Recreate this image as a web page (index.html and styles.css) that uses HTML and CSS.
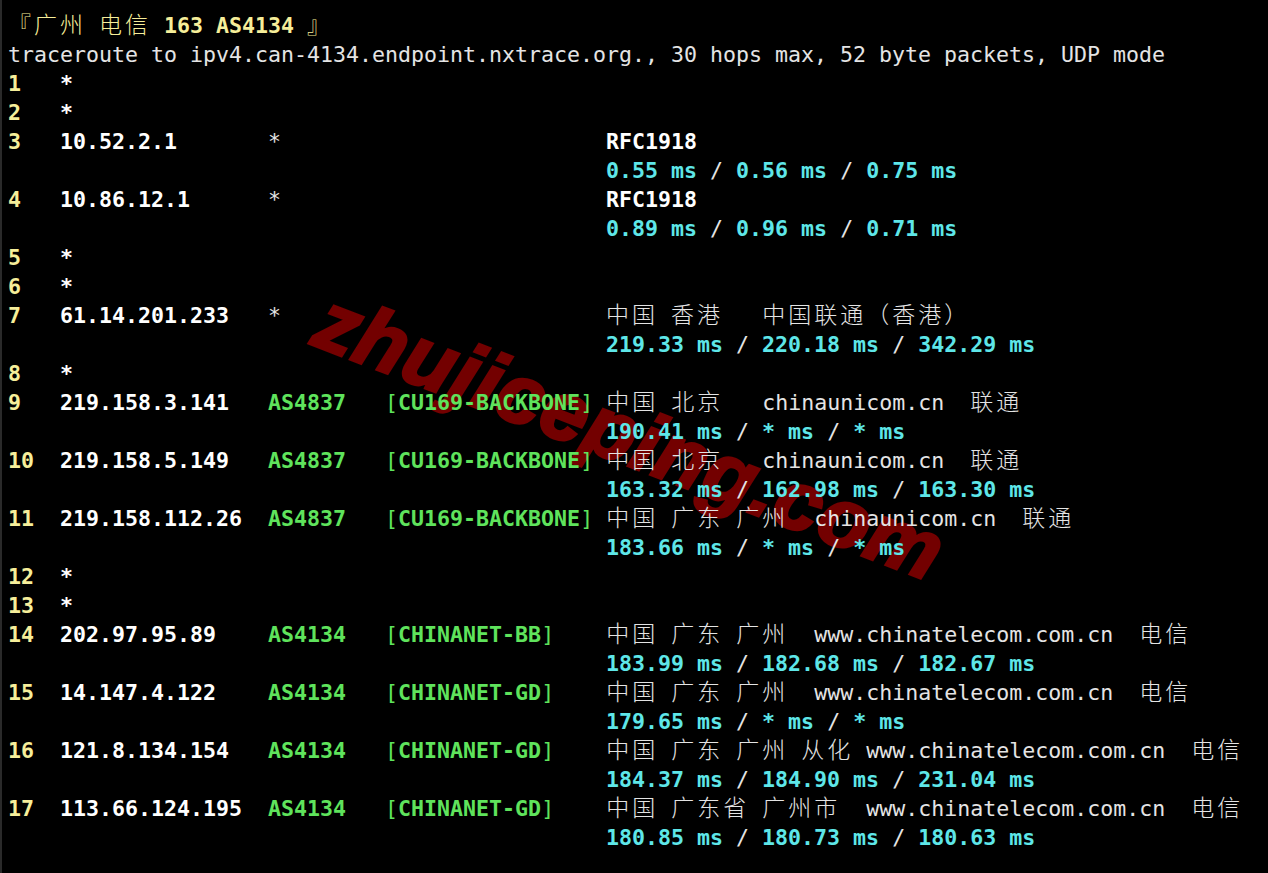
FILE: index.html
```html
<!DOCTYPE html>
<html lang="zh-CN">
<head>
<meta charset="utf-8">
<title>nexttrace</title>
<link rel="stylesheet" href="styles.css">
</head>
<body>
<div class="term">
  <div class="watermark">zhujiceping.com</div>
  <div class="lines">
    <div class="ln"><span class="y"><span class="c">『广州</span> <span class="c">电信</span> <b>163 AS4134</b> <span class="c">』</span></span></div>
    <div class="ln"><span class="t">traceroute to ipv4.can-4134.endpoint.nxtrace.org., 30 hops max, 52 byte packets, UDP mode</span></div>
    <div class="ln"><b class="y">1</b>   <b class="w">*</b></div>
    <div class="ln"><b class="y">2</b>   <b class="w">*</b></div>
    <div class="ln"><b class="y">3</b>   <b class="w">10.52.2.1</b>       <span class="t">*</span>                         <b class="w">RFC1918</b></div>
    <div class="ln">                                              <b class="cy">0.55 ms</b> <span class="t">/</span> <b class="cy">0.56 ms</b> <span class="t">/</span> <b class="cy">0.75 ms</b></div>
    <div class="ln"><b class="y">4</b>   <b class="w">10.86.12.1</b>      <span class="t">*</span>                         <b class="w">RFC1918</b></div>
    <div class="ln">                                              <b class="cy">0.89 ms</b> <span class="t">/</span> <b class="cy">0.96 ms</b> <span class="t">/</span> <b class="cy">0.71 ms</b></div>
    <div class="ln"><b class="y">5</b>   <b class="w">*</b></div>
    <div class="ln"><b class="y">6</b>   <b class="w">*</b></div>
    <div class="ln"><b class="y">7</b>   <b class="w">61.14.201.233</b>   <span class="t">*</span>                         <span class="t"><span class="c">中国</span> <span class="c">香港</span>   <span class="c">中国联通（香港）</span></span></div>
    <div class="ln">                                              <b class="cy">219.33 ms</b> <span class="t">/</span> <b class="cy">220.18 ms</b> <span class="t">/</span> <b class="cy">342.29 ms</b></div>
    <div class="ln"><b class="y">8</b>   <b class="w">*</b></div>
    <div class="ln"><b class="y">9</b>   <b class="w">219.158.3.141</b>   <b class="g">AS4837</b>   <span class="g">[<b>CU169-BACKBONE</b>]</span> <span class="t"><span class="c">中国</span> <span class="c">北京</span>   chinaunicom.cn  <span class="c">联通</span></span></div>
    <div class="ln">                                              <b class="cy">190.41 ms</b> <span class="t">/</span> <b class="cy">* ms</b> <span class="t">/</span> <b class="cy">* ms</b></div>
    <div class="ln"><b class="y">10</b>  <b class="w">219.158.5.149</b>   <b class="g">AS4837</b>   <span class="g">[<b>CU169-BACKBONE</b>]</span> <span class="t"><span class="c">中国</span> <span class="c">北京</span>   chinaunicom.cn  <span class="c">联通</span></span></div>
    <div class="ln">                                              <b class="cy">163.32 ms</b> <span class="t">/</span> <b class="cy">162.98 ms</b> <span class="t">/</span> <b class="cy">163.30 ms</b></div>
    <div class="ln"><b class="y">11</b>  <b class="w">219.158.112.26</b>  <b class="g">AS4837</b>   <span class="g">[<b>CU169-BACKBONE</b>]</span> <span class="t"><span class="c">中国</span> <span class="c">广东</span> <span class="c">广州</span>  chinaunicom.cn  <span class="c">联通</span></span></div>
    <div class="ln">                                              <b class="cy">183.66 ms</b> <span class="t">/</span> <b class="cy">* ms</b> <span class="t">/</span> <b class="cy">* ms</b></div>
    <div class="ln"><b class="y">12</b>  <b class="w">*</b></div>
    <div class="ln"><b class="y">13</b>  <b class="w">*</b></div>
    <div class="ln"><b class="y">14</b>  <b class="w">202.97.95.89</b>    <b class="g">AS4134</b>   <span class="g">[<b>CHINANET-BB</b>]</span>    <span class="t"><span class="c">中国</span> <span class="c">广东</span> <span class="c">广州</span>  www.chinatelecom.com.cn  <span class="c">电信</span></span></div>
    <div class="ln">                                              <b class="cy">183.99 ms</b> <span class="t">/</span> <b class="cy">182.68 ms</b> <span class="t">/</span> <b class="cy">182.67 ms</b></div>
    <div class="ln"><b class="y">15</b>  <b class="w">14.147.4.122</b>    <b class="g">AS4134</b>   <span class="g">[<b>CHINANET-GD</b>]</span>    <span class="t"><span class="c">中国</span> <span class="c">广东</span> <span class="c">广州</span>  www.chinatelecom.com.cn  <span class="c">电信</span></span></div>
    <div class="ln">                                              <b class="cy">179.65 ms</b> <span class="t">/</span> <b class="cy">* ms</b> <span class="t">/</span> <b class="cy">* ms</b></div>
    <div class="ln"><b class="y">16</b>  <b class="w">121.8.134.154</b>   <b class="g">AS4134</b>   <span class="g">[<b>CHINANET-GD</b>]</span>    <span class="t"><span class="c">中国</span> <span class="c">广东</span> <span class="c">广州</span> <span class="c">从化</span> www.chinatelecom.com.cn  <span class="c">电信</span></span></div>
    <div class="ln">                                              <b class="cy">184.37 ms</b> <span class="t">/</span> <b class="cy">184.90 ms</b> <span class="t">/</span> <b class="cy">231.04 ms</b></div>
    <div class="ln"><b class="y">17</b>  <b class="w">113.66.124.195</b>  <b class="g">AS4134</b>   <span class="g">[<b>CHINANET-GD</b>]</span>    <span class="t"><span class="c">中国</span> <span class="c">广东省</span> <span class="c">广州市</span>  www.chinatelecom.com.cn  <span class="c">电信</span></span></div>
    <div class="ln">                                              <b class="cy">180.85 ms</b> <span class="t">/</span> <b class="cy">180.73 ms</b> <span class="t">/</span> <b class="cy">180.63 ms</b></div>
  </div>
</div>
</body>
</html>
```
FILE: styles.css
```css
html, body {
  margin: 0;
  padding: 0;
  background: #000;
}

.term {
  position: relative;
  width: 1268px;
  height: 873px;
  box-sizing: border-box;
  border-left: 2px solid #2a2a2a;
  background: #000;
  overflow: hidden;
}

.lines {
  position: relative;
  z-index: 1;
  padding: 11px 0 0 6px;
  font-family: "DejaVu Sans Mono", "Liberation Mono", monospace;
  font-size: 21.6px;
  color: #e4e4e4;
}

.ln {
  height: 29px;
  line-height: 29px;
  white-space: pre;
}

b {
  font-weight: bold;
}

.y { color: #f6ee9a; }
.w { color: #ffffff; }
.t { color: #e4e4e4; font-weight: normal; }
.g { color: #5fe35c; }
.cy { color: #5ee6e8; }

.c {
  font-family: "Noto Sans CJK SC", sans-serif;
  font-size: 23px;
  font-weight: 300;
  letter-spacing: 3px;
  line-height: 16px;
}

.watermark {
  position: absolute;
  z-index: 0;
  left: 628px;
  top: 436px;
  transform: translate(-50%, -50%) rotate(21deg);
  font-family: "Liberation Sans", Arial, sans-serif;
  font-weight: bold;
  font-style: italic;
  font-size: 83px;
  line-height: 1;
  color: #730000;
  -webkit-text-stroke: 3px #730000;
  letter-spacing: 1px;
  white-space: nowrap;
}
```
